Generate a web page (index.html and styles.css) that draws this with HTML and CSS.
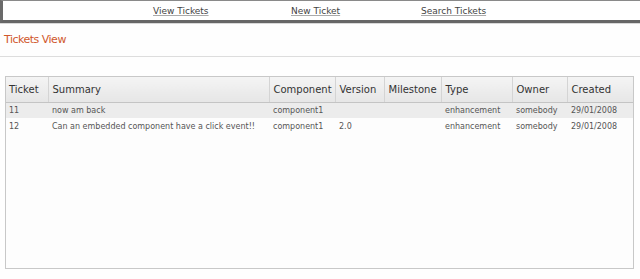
FILE: index.html
```html
<!DOCTYPE html>
<html lang="en">
<head>
    <meta charset="UTF-8">
    <title>Tickets View</title>
    <link rel="stylesheet" href="styles.css">
</head>
<body>

    <div class="topnav">
        <a href="#" class="nav-link nav-view">View Tickets</a>
        <a href="#" class="nav-link nav-new">New Ticket</a>
        <a href="#" class="nav-link">Search Tickets</a>
    </div>

    <h2 class="page-title">Tickets View</h2>

    <div class="grid-box">
        <table class="tickets">
            <colgroup>
                <col class="c-ticket">
                <col class="c-summary">
                <col class="c-component">
                <col class="c-version">
                <col class="c-milestone">
                <col class="c-type">
                <col class="c-owner">
                <col class="c-created">
            </colgroup>
            <thead>
                <tr>
                    <th>Ticket</th>
                    <th>Summary</th>
                    <th>Component</th>
                    <th>Version</th>
                    <th>Milestone</th>
                    <th>Type</th>
                    <th>Owner</th>
                    <th>Created</th>
                </tr>
            </thead>
            <tbody>
                <tr class="odd">
                    <td>11</td>
                    <td>now am back</td>
                    <td>component1</td>
                    <td></td>
                    <td></td>
                    <td>enhancement</td>
                    <td>somebody</td>
                    <td>29/01/2008</td>
                </tr>
                <tr>
                    <td>12</td>
                    <td>Can an embedded component have a click event!!</td>
                    <td>component1</td>
                    <td>2.0</td>
                    <td></td>
                    <td>enhancement</td>
                    <td>somebody</td>
                    <td>29/01/2008</td>
                </tr>
            </tbody>
        </table>
    </div>

</body>
</html>
```

FILE: styles.css
```css
* {
    margin: 0;
    padding: 0;
    box-sizing: border-box;
    font-family: 'DejaVu Sans', sans-serif;
}
body {
    background: #fefefe;
    width: 640px;
    height: 279px;
    overflow: hidden;
}
.topnav {
    display: flex;
    align-items: center;
    height: 23px;
    padding-left: 150px;
    background: #fff;
    border-top: 1px solid #8a8a8a;
    border-left: 3px solid #6a6a6a;
    border-bottom: 3px solid #666;
    box-shadow: 0 1px 0 #d8d8d8;
}
.nav-link {
    font-size: 9px;
    color: #444;
    text-decoration: underline;
    text-decoration-color: #aaa;
}
.nav-view {
    width: 138px;
}
.nav-new {
    width: 130px;
}
.page-title {
    font-size: 11px;
    font-weight: 400;
    letter-spacing: -0.5px;
    color: #d0582c;
    padding: 10px 0 0 4px;
    height: 34px;
    border-bottom: 1px solid #ddd;
}
.grid-box {
    margin: 19px 6px 0 5px;
    height: 193px;
    border: 1px solid #c8c8c8;
    background: #fdfdfd;
}
.tickets {
    width: 100%;
    border-collapse: collapse;
    table-layout: fixed;
}
.c-ticket { width: 42px; }
.c-summary { width: 221px; }
.c-component { width: 66px; }
.c-version { width: 49px; }
.c-milestone { width: 57px; }
.c-type { width: 71px; }
.c-owner { width: 55px; }
.tickets th {
    height: 25px;
    font-size: 10px;
    font-weight: 400;
    color: #333;
    text-align: left;
    padding-left: 4px;
    background: linear-gradient(#f4f4f4, #e6e6e6);
    border-left: 1px solid #d4d4d4;
    border-bottom: 1px solid #c4c4c4;
}
.tickets th:first-child {
    border-left: none;
    padding-left: 3px;
}
.tickets td {
    height: 16px;
    font-size: 8px;
    color: #555;
    padding-left: 4px;
    white-space: nowrap;
    overflow: hidden;
}
.tickets td:first-child {
    padding-left: 3px;
}
.tickets tr.odd td {
    background: #ececec;
}
```
